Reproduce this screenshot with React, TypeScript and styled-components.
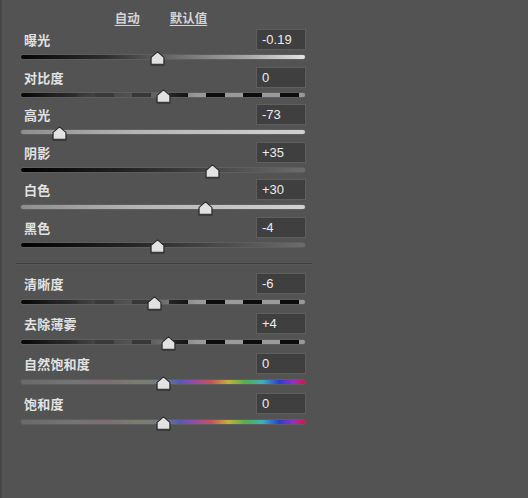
import React from "react";
import styled, { createGlobalStyle } from "styled-components";

const GlobalStyle = createGlobalStyle`
  html, body {
    margin: 0;
    padding: 0;
    background: #535353;
  }
  body {
    width: 528px;
    height: 498px;
    overflow: hidden;
  }
`;

type TrackKind = "exposure" | "contrast" | "light" | "dark" | "color";

const trackBackgrounds: Record<TrackKind, string> = {
  exposure: "linear-gradient(to right, #050505 0%, #2e2e2e 30%, #6e6e6e 55%, #a8a8a8 80%, #e4e4e4 100%)",
  contrast:
    "linear-gradient(to right, #060606 0%, rgba(60,60,60,0.95) 25%, rgba(70,70,70,0.75) 45%, rgba(70,70,70,0) 62%), repeating-linear-gradient(to right, #0c0c0c 0px, #0c0c0c 19px, #9a9a9a 19px, #9a9a9a 37px)",
  light: "linear-gradient(to right, #8e8e8e 0%, #b4b4b4 40%, #d2d2d2 100%)",
  dark: "linear-gradient(to right, #000 0%, #202020 35%, #4a4a4a 70%, #6c6c6c 100%)",
  color:
    "linear-gradient(to right, #6a6a6a 0%, #747474 18%, #7d6c74 30%, #778070 42%, #777788 50%, #5858b8 56%, #9a4aa8 61%, #c25454 67%, #c2b040 73%, #52b04e 79%, #3eb0bc 85%, #2c3cd0 91%, #9a2cc4 96%, #e0103c 100%)",
};

const Page = styled.div`
  box-sizing: border-box;
  width: 528px;
  height: 498px;
  border-left: 2px solid #474747;
`;

const Panel = styled.div`
  width: 284px;
  margin-left: 19px;
  padding-top: 10px;
  font-family: "Noto Sans CJK SC", "Liberation Sans", sans-serif;
`;

const Header = styled.div`
  display: flex;
  justify-content: center;
  gap: 30px;
  height: 16px;
  line-height: 16px;
  margin-bottom: 3px;
  padding-right: 4px;
`;

const HeaderLink = styled.span`
  font-size: 12.5px;
  font-weight: 700;
  color: #d4d4d4;
  text-decoration: underline;
  text-underline-offset: 2px;
`;

const Row = styled.div<{ $gap: number; $after: number }>`
  display: flex;
  flex-direction: column;
  gap: ${(p) => p.$gap}px;
  margin-bottom: ${(p) => p.$after}px;
`;

const TopLine = styled.div`
  display: flex;
  justify-content: space-between;
  align-items: center;
  height: 21px;
`;

const Label = styled.span`
  padding-left: 3px;
  font-size: 13px;
  font-weight: 700;
  color: #e2e2e2;
  letter-spacing: 0.2px;
`;

const ValueBox = styled.div`
  box-sizing: border-box;
  width: 50px;
  height: 21px;
  margin-right: -1px;
  padding-left: 5px;
  background: #3f3f3f;
  border: 1px solid #5e5e5e;
  color: #ececec;
  font-family: "Liberation Sans", Arial, sans-serif;
  font-size: 13px;
  line-height: 19px;
`;

const Track = styled.div<{ $kind: TrackKind }>`
  position: relative;
  height: 4px;
  border-radius: 2px;
  background: ${(p) => trackBackgrounds[p.$kind]};
  box-shadow: 0 0 0 0.5px rgba(120, 120, 120, 0.6);
`;

const Thumb = styled.svg`
  position: absolute;
  top: -4px;
  width: 15px;
  height: 14px;
  margin-left: -7.5px;
  overflow: visible;
  filter: drop-shadow(0 1px 0.5px rgba(0, 0, 0, 0.35));
`;

const Separator = styled.div`
  height: 1px;
  margin: 16.5px -7px 9px -5px;
  background: #3e3e3e;
  box-shadow: 0 1px 0 rgba(100, 100, 100, 0.35);
`;

type Slider = {
  label: string;
  value: string;
  pct: number;
  kind: TrackKind;
};

const group1: Slider[] = [
  { label: "曝光", value: "-0.19", pct: (-0.19 + 5) / 10, kind: "exposure" },
  { label: "对比度", value: "0", pct: 0.5, kind: "contrast" },
  { label: "高光", value: "-73", pct: (100 - 73) / 200, kind: "light" },
  { label: "阴影", value: "+35", pct: (100 + 35) / 200, kind: "dark" },
  { label: "白色", value: "+30", pct: (100 + 30) / 200, kind: "light" },
  { label: "黑色", value: "-4", pct: (100 - 4) / 200, kind: "dark" },
];

const group2: Slider[] = [
  { label: "清晰度", value: "-6", pct: (100 - 6) / 200, kind: "contrast" },
  { label: "去除薄雾", value: "+4", pct: (100 + 4) / 200, kind: "contrast" },
  { label: "自然饱和度", value: "0", pct: 0.5, kind: "color" },
  { label: "饱和度", value: "0", pct: 0.5, kind: "color" },
];

function SliderRow({ s, gap, after }: { s: Slider; gap: number; after: number }) {
  return (
    <Row $gap={gap} $after={after}>
      <TopLine>
        <Label>{s.label}</Label>
        <ValueBox>{s.value}</ValueBox>
      </TopLine>
      <Track $kind={s.kind}>
        <Thumb viewBox="0 0 15 14" style={{ left: `${s.pct * 100}%` }}>
          <path
            d="M7.5 0.9 L13.9 6.4 L13.9 13.2 L1.1 13.2 L1.1 6.4 Z"
            fill="#e2e2e2"
            stroke="#2c2c2c"
            strokeWidth="1.1"
            strokeLinejoin="round"
          />
        </Thumb>
      </Track>
    </Row>
  );
}

export default function App() {
  return (
    <>
      <GlobalStyle />
      <Page>
        <Panel>
          <Header>
            <HeaderLink>自动</HeaderLink>
            <HeaderLink>默认值</HeaderLink>
          </Header>
          {group1.map((s, i) => (
            <SliderRow key={s.label} s={s} gap={5} after={i === group1.length - 1 ? 0 : 7.5} />
          ))}
          <Separator />
          {group2.map((s) => (
            <SliderRow key={s.label} s={s} gap={6} after={9} />
          ))}
        </Panel>
      </Page>
    </>
  );
}
